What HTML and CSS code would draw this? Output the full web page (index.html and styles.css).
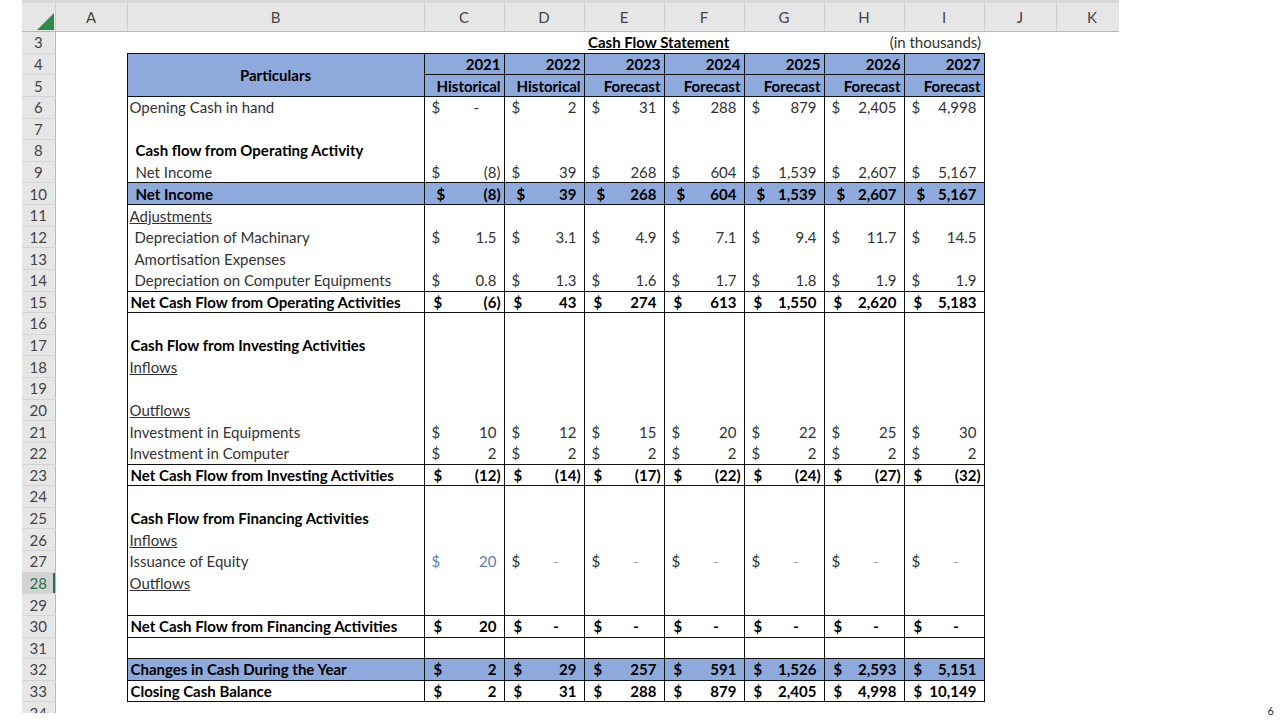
FILE: index.html
```html
<!DOCTYPE html>
<html>
<head>
<meta charset="utf-8">
<link rel="stylesheet" href="styles.css">
</head>
<body>
<div class="sheet">
<table class="grid">
<colgroup><col class="rh"><col class="a"><col class="b"><col class="y"><col class="y"><col class="y"><col class="y"><col class="y"><col class="y"><col class="y"><col class="j"><col class="k"></colgroup>
<thead>
<tr><th class="corner"><svg width="17" height="17" viewBox="0 0 17 17"><polygon points="17,0 17,17 0,17" fill="#2f8a4c"/></svg></th><th>A</th><th>B</th><th>C</th><th>D</th><th>E</th><th>F</th><th>G</th><th>H</th><th>I</th><th>J</th><th>K</th></tr>
</thead>
<tbody>
<tr><td class="rn">3</td><td></td><td></td><td></td><td></td><td colspan="2" class="title">Cash Flow Statement</td><td></td><td colspan="2" class="units">(in thousands)</td><td></td><td></td></tr>
<tr class="blue bt bb hd"><td class="rn">4</td><td></td><td class="c part" rowspan="2">Particulars</td><td class="c yr">2021</td><td class="c yr">2022</td><td class="c yr">2023</td><td class="c yr">2024</td><td class="c yr">2025</td><td class="c yr">2026</td><td class="c yr">2027</td><td></td><td></td></tr>
<tr class="blue bb hd"><td class="rn">5</td><td></td><td class="c yr">Historical</td><td class="c yr">Historical</td><td class="c yr">Forecast</td><td class="c yr">Forecast</td><td class="c yr">Forecast</td><td class="c yr">Forecast</td><td class="c yr">Forecast</td><td></td><td></td></tr>
<tr><td class="rn">6</td><td></td><td class="c l">Opening Cash in hand</td>
<td class="c"><div class="acc"><span>$</span><span>-<i>00)</i></span></div></td>
<td class="c"><div class="acc"><span>$</span><span>2<i>)</i></span></div></td>
<td class="c"><div class="acc"><span>$</span><span>31<i>)</i></span></div></td>
<td class="c"><div class="acc"><span>$</span><span>288<i>)</i></span></div></td>
<td class="c"><div class="acc"><span>$</span><span>879<i>)</i></span></div></td>
<td class="c"><div class="acc"><span>$</span><span>2,405<i>)</i></span></div></td>
<td class="c"><div class="acc"><span>$</span><span>4,998<i>)</i></span></div></td>
<td></td><td></td></tr>
<tr><td class="rn">7</td><td></td><td class="c"></td><td class="c"></td><td class="c"></td><td class="c"></td><td class="c"></td><td class="c"></td><td class="c"></td><td class="c"></td><td></td><td></td></tr>
<tr class="b"><td class="rn">8</td><td></td><td class="c ind">Cash flow from Operating Activity</td><td class="c"></td><td class="c"></td><td class="c"></td><td class="c"></td><td class="c"></td><td class="c"></td><td class="c"></td><td></td><td></td></tr>
<tr><td class="rn">9</td><td></td><td class="c ind">Net Income</td>
<td class="c"><div class="acc"><span>$</span><span>(8)</span></div></td>
<td class="c"><div class="acc"><span>$</span><span>39<i>)</i></span></div></td>
<td class="c"><div class="acc"><span>$</span><span>268<i>)</i></span></div></td>
<td class="c"><div class="acc"><span>$</span><span>604<i>)</i></span></div></td>
<td class="c"><div class="acc"><span>$</span><span>1,539<i>)</i></span></div></td>
<td class="c"><div class="acc"><span>$</span><span>2,607<i>)</i></span></div></td>
<td class="c"><div class="acc"><span>$</span><span>5,167<i>)</i></span></div></td>
<td></td><td></td></tr>
<tr class="b blue bt bb ni"><td class="rn">10</td><td></td><td class="c ind">Net Income</td>
<td class="c"><div class="acc"><span>$</span><span>(8)</span></div></td>
<td class="c"><div class="acc"><span>$</span><span>39<i>)</i></span></div></td>
<td class="c"><div class="acc"><span>$</span><span>268<i>)</i></span></div></td>
<td class="c"><div class="acc"><span>$</span><span>604<i>)</i></span></div></td>
<td class="c"><div class="acc"><span>$</span><span>1,539<i>)</i></span></div></td>
<td class="c"><div class="acc"><span>$</span><span>2,607<i>)</i></span></div></td>
<td class="c"><div class="acc"><span>$</span><span>5,167<i>)</i></span></div></td>
<td></td><td></td></tr>
<tr><td class="rn">11</td><td></td><td class="c l"><u>Adjustments</u></td><td class="c"></td><td class="c"></td><td class="c"></td><td class="c"></td><td class="c"></td><td class="c"></td><td class="c"></td><td></td><td></td></tr>
<tr><td class="rn">12</td><td></td><td class="c ind2">Depreciation of Machinary</td>
<td class="c"><div class="acc"><span>$</span><span>1.5<i>)</i></span></div></td>
<td class="c"><div class="acc"><span>$</span><span>3.1<i>)</i></span></div></td>
<td class="c"><div class="acc"><span>$</span><span>4.9<i>)</i></span></div></td>
<td class="c"><div class="acc"><span>$</span><span>7.1<i>)</i></span></div></td>
<td class="c"><div class="acc"><span>$</span><span>9.4<i>)</i></span></div></td>
<td class="c"><div class="acc"><span>$</span><span>11.7<i>)</i></span></div></td>
<td class="c"><div class="acc"><span>$</span><span>14.5<i>)</i></span></div></td>
<td></td><td></td></tr>
<tr><td class="rn">13</td><td></td><td class="c ind2">Amortisation Expenses</td><td class="c"></td><td class="c"></td><td class="c"></td><td class="c"></td><td class="c"></td><td class="c"></td><td class="c"></td><td></td><td></td></tr>
<tr class="bb"><td class="rn">14</td><td></td><td class="c ind2">Depreciation on Computer Equipments</td>
<td class="c"><div class="acc"><span>$</span><span>0.8<i>)</i></span></div></td>
<td class="c"><div class="acc"><span>$</span><span>1.3<i>)</i></span></div></td>
<td class="c"><div class="acc"><span>$</span><span>1.6<i>)</i></span></div></td>
<td class="c"><div class="acc"><span>$</span><span>1.7<i>)</i></span></div></td>
<td class="c"><div class="acc"><span>$</span><span>1.8<i>)</i></span></div></td>
<td class="c"><div class="acc"><span>$</span><span>1.9<i>)</i></span></div></td>
<td class="c"><div class="acc"><span>$</span><span>1.9<i>)</i></span></div></td>
<td></td><td></td></tr>
<tr class="b bb"><td class="rn">15</td><td></td><td class="c lb">Net Cash Flow from Operating Activities</td>
<td class="c"><div class="acc"><span>$</span><span>(6)</span></div></td>
<td class="c"><div class="acc"><span>$</span><span>43<i>)</i></span></div></td>
<td class="c"><div class="acc"><span>$</span><span>274<i>)</i></span></div></td>
<td class="c"><div class="acc"><span>$</span><span>613<i>)</i></span></div></td>
<td class="c"><div class="acc"><span>$</span><span>1,550<i>)</i></span></div></td>
<td class="c"><div class="acc"><span>$</span><span>2,620<i>)</i></span></div></td>
<td class="c"><div class="acc"><span>$</span><span>5,183<i>)</i></span></div></td>
<td></td><td></td></tr>
<tr><td class="rn">16</td><td></td><td class="c"></td><td class="c"></td><td class="c"></td><td class="c"></td><td class="c"></td><td class="c"></td><td class="c"></td><td class="c"></td><td></td><td></td></tr>
<tr class="b"><td class="rn">17</td><td></td><td class="c lb">Cash Flow from Investing Activities</td><td class="c"></td><td class="c"></td><td class="c"></td><td class="c"></td><td class="c"></td><td class="c"></td><td class="c"></td><td></td><td></td></tr>
<tr><td class="rn">18</td><td></td><td class="c l"><u>Inflows</u></td><td class="c"></td><td class="c"></td><td class="c"></td><td class="c"></td><td class="c"></td><td class="c"></td><td class="c"></td><td></td><td></td></tr>
<tr><td class="rn">19</td><td></td><td class="c"></td><td class="c"></td><td class="c"></td><td class="c"></td><td class="c"></td><td class="c"></td><td class="c"></td><td class="c"></td><td></td><td></td></tr>
<tr><td class="rn">20</td><td></td><td class="c l"><u>Outflows</u></td><td class="c"></td><td class="c"></td><td class="c"></td><td class="c"></td><td class="c"></td><td class="c"></td><td class="c"></td><td></td><td></td></tr>
<tr><td class="rn">21</td><td></td><td class="c l">Investment in Equipments</td>
<td class="c"><div class="acc"><span>$</span><span>10<i>)</i></span></div></td>
<td class="c"><div class="acc"><span>$</span><span>12<i>)</i></span></div></td>
<td class="c"><div class="acc"><span>$</span><span>15<i>)</i></span></div></td>
<td class="c"><div class="acc"><span>$</span><span>20<i>)</i></span></div></td>
<td class="c"><div class="acc"><span>$</span><span>22<i>)</i></span></div></td>
<td class="c"><div class="acc"><span>$</span><span>25<i>)</i></span></div></td>
<td class="c"><div class="acc"><span>$</span><span>30<i>)</i></span></div></td>
<td></td><td></td></tr>
<tr class="bb"><td class="rn">22</td><td></td><td class="c l">Investment in Computer</td>
<td class="c"><div class="acc"><span>$</span><span>2<i>)</i></span></div></td>
<td class="c"><div class="acc"><span>$</span><span>2<i>)</i></span></div></td>
<td class="c"><div class="acc"><span>$</span><span>2<i>)</i></span></div></td>
<td class="c"><div class="acc"><span>$</span><span>2<i>)</i></span></div></td>
<td class="c"><div class="acc"><span>$</span><span>2<i>)</i></span></div></td>
<td class="c"><div class="acc"><span>$</span><span>2<i>)</i></span></div></td>
<td class="c"><div class="acc"><span>$</span><span>2<i>)</i></span></div></td>
<td></td><td></td></tr>
<tr class="b bb"><td class="rn">23</td><td></td><td class="c lb">Net Cash Flow from Investing Activities</td>
<td class="c"><div class="acc"><span>$</span><span>(12)</span></div></td>
<td class="c"><div class="acc"><span>$</span><span>(14)</span></div></td>
<td class="c"><div class="acc"><span>$</span><span>(17)</span></div></td>
<td class="c"><div class="acc"><span>$</span><span>(22)</span></div></td>
<td class="c"><div class="acc"><span>$</span><span>(24)</span></div></td>
<td class="c"><div class="acc"><span>$</span><span>(27)</span></div></td>
<td class="c"><div class="acc"><span>$</span><span>(32)</span></div></td>
<td></td><td></td></tr>
<tr><td class="rn">24</td><td></td><td class="c"></td><td class="c"></td><td class="c"></td><td class="c"></td><td class="c"></td><td class="c"></td><td class="c"></td><td class="c"></td><td></td><td></td></tr>
<tr class="b"><td class="rn">25</td><td></td><td class="c lb">Cash Flow from Financing Activities</td><td class="c"></td><td class="c"></td><td class="c"></td><td class="c"></td><td class="c"></td><td class="c"></td><td class="c"></td><td></td><td></td></tr>
<tr><td class="rn">26</td><td></td><td class="c l"><u>Inflows</u></td><td class="c"></td><td class="c"></td><td class="c"></td><td class="c"></td><td class="c"></td><td class="c"></td><td class="c"></td><td></td><td></td></tr>
<tr><td class="rn">27</td><td></td><td class="c l">Issuance of Equity</td>
<td class="c inp"><div class="acc"><span>$</span><span>20<i>)</i></span></div></td>
<td class="c"><div class="acc"><span>$</span><span class="dim">-<i>00)</i></span></div></td>
<td class="c"><div class="acc"><span>$</span><span class="dim">-<i>00)</i></span></div></td>
<td class="c"><div class="acc"><span>$</span><span class="dim">-<i>00)</i></span></div></td>
<td class="c"><div class="acc"><span>$</span><span class="dim">-<i>00)</i></span></div></td>
<td class="c"><div class="acc"><span>$</span><span class="dim">-<i>00)</i></span></div></td>
<td class="c"><div class="acc"><span>$</span><span class="dim">-<i>00)</i></span></div></td>
<td></td><td></td></tr>
<tr><td class="rn sel">28</td><td></td><td class="c l"><u>Outflows</u></td><td class="c"></td><td class="c"></td><td class="c"></td><td class="c"></td><td class="c"></td><td class="c"></td><td class="c"></td><td></td><td></td></tr>
<tr class="bb"><td class="rn">29</td><td></td><td class="c"></td><td class="c"></td><td class="c"></td><td class="c"></td><td class="c"></td><td class="c"></td><td class="c"></td><td class="c"></td><td></td><td></td></tr>
<tr class="b bb"><td class="rn">30</td><td></td><td class="c lb">Net Cash Flow from Financing Activities</td>
<td class="c"><div class="acc"><span>$</span><span>20<i>)</i></span></div></td>
<td class="c"><div class="acc"><span>$</span><span>-<i>00)</i></span></div></td>
<td class="c"><div class="acc"><span>$</span><span>-<i>00)</i></span></div></td>
<td class="c"><div class="acc"><span>$</span><span>-<i>00)</i></span></div></td>
<td class="c"><div class="acc"><span>$</span><span>-<i>00)</i></span></div></td>
<td class="c"><div class="acc"><span>$</span><span>-<i>00)</i></span></div></td>
<td class="c"><div class="acc"><span>$</span><span>-<i>00)</i></span></div></td>
<td></td><td></td></tr>
<tr class="bb"><td class="rn">31</td><td></td><td class="c"></td><td class="c"></td><td class="c"></td><td class="c"></td><td class="c"></td><td class="c"></td><td class="c"></td><td class="c"></td><td></td><td></td></tr>
<tr class="b blue bb"><td class="rn">32</td><td></td><td class="c lb">Changes in Cash During the Year</td>
<td class="c"><div class="acc"><span>$</span><span>2<i>)</i></span></div></td>
<td class="c"><div class="acc"><span>$</span><span>29<i>)</i></span></div></td>
<td class="c"><div class="acc"><span>$</span><span>257<i>)</i></span></div></td>
<td class="c"><div class="acc"><span>$</span><span>591<i>)</i></span></div></td>
<td class="c"><div class="acc"><span>$</span><span>1,526<i>)</i></span></div></td>
<td class="c"><div class="acc"><span>$</span><span>2,593<i>)</i></span></div></td>
<td class="c"><div class="acc"><span>$</span><span>5,151<i>)</i></span></div></td>
<td></td><td></td></tr>
<tr class="b bb"><td class="rn">33</td><td></td><td class="c lb">Closing Cash Balance</td>
<td class="c"><div class="acc"><span>$</span><span>2<i>)</i></span></div></td>
<td class="c"><div class="acc"><span>$</span><span>31<i>)</i></span></div></td>
<td class="c"><div class="acc"><span>$</span><span>288<i>)</i></span></div></td>
<td class="c"><div class="acc"><span>$</span><span>879<i>)</i></span></div></td>
<td class="c"><div class="acc"><span>$</span><span>2,405<i>)</i></span></div></td>
<td class="c"><div class="acc"><span>$</span><span>4,998<i>)</i></span></div></td>
<td class="c"><div class="acc"><span>$</span><span>10,149<i>)</i></span></div></td>
<td></td><td></td></tr>
<tr><td class="rn">34</td><td></td><td></td><td></td><td></td><td></td><td></td><td></td><td></td><td></td><td></td><td></td></tr>
</tbody>
</table>
</div>
<div class="page">6</div>
</body>
</html>
```
FILE: styles.css
```css
* { box-sizing: border-box; }
body {
  margin: 0;
  background: #fff;
  font-family: Lato, "Open Sans", sans-serif;
  color: #333;
}
.sheet {
  margin-left: 22px;
  width: 1097px;
  height: 713px;
  overflow: hidden;
  border-top: 3px solid #d9d9d9;
}
.grid {
  table-layout: fixed;
  border-collapse: collapse;
  width: 1106px;
  font-size: 15px;
  line-height: 18px;
}
col.rh { width: 33px; }
col.a { width: 72px; }
col.b { width: 297px; }
col.y { width: 80px; }
col.j, col.k { width: 72px; }
.grid th, .grid td {
  padding: 0;
  white-space: nowrap;
  overflow: visible;
}
thead th {
  height: 28.5px;
  background: #e6e6e6;
  font-weight: normal;
  color: #444;
  text-align: center;
  border-right: 1px solid #cdcdcd;
  border-bottom: 1px solid #b8b8b8;
  padding-top: 4px;
}
thead th.corner {
  text-align: right;
  vertical-align: bottom;
  padding: 0 1px 1px 0;
  line-height: 0;
}
tbody tr { height: 21.63px; }
td.rn {
  background: #e6e6e6;
  text-align: center;
  color: #444;
  border-right: 1px solid #b8b8b8;
  border-bottom: 1px solid #d4d4d4;
}
td.rn.sel {
  background: #d3d3d3;
  color: #217346;
  box-shadow: inset -2px 0 0 #217346;
}
td.c {
  border-left: 1px solid #111;
  border-right: 1px solid #111;
}
tr.bb td.c { border-bottom: 1px solid #111; }
tr.bt td.c { border-top: 1px solid #111; }
tr.blue td.c { background: #8ea9db; }
tr.b td.c { font-weight: bold; color: #000; }
tr.hd td.c { font-weight: bold; color: #000; }
td.part { text-align: center; }
td.yr { text-align: right; padding-right: 3px; }
td.l { padding-left: 2px; }
td.lb { padding-left: 3px; }
td.ind { padding-left: 8px; }
td.ind2 { padding-left: 7px; }
td.title {
  padding-left: 4px;
  font-weight: bold;
  color: #000;
  text-decoration: underline;
}
td.units { text-align: right; padding-right: 3px; color: #333; }
.acc {
  display: flex;
  justify-content: space-between;
  padding: 0 3px 0 7px;
}
tr.b .acc { padding-left: 9px; }
tr.ni .acc { padding-left: 12px; }
.acc i { visibility: hidden; font-style: normal; }
td.inp { color: #5f7eb1; }
.dim { color: #a8a8a8; }
.page {
  position: absolute;
  right: 6px;
  top: 704px;
  font-size: 11px;
  color: #333;
}
```
